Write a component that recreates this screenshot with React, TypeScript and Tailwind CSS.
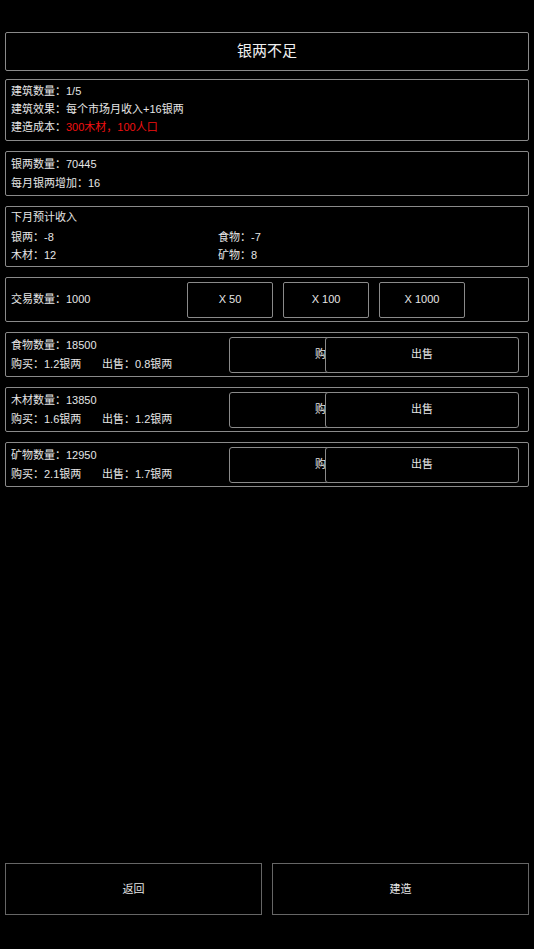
import React from "react";

const font = { fontFamily: '"Liberation Sans", "Noto Sans CJK SC", sans-serif' };

function Box({ children, className = "" }: { children: React.ReactNode; className?: string }) {
  return (
    <div className={`border border-[#8a8a8a] rounded-[2px] px-[5px] ${className}`}>{children}</div>
  );
}

function TradeRow({ name, amount, buy, sell }: { name: string; amount: number; buy: string; sell: string }) {
  return (
    <Box className="flex items-center h-[45px] mt-[10px]">
      <div className="w-[218px] shrink-0 leading-[19px] pt-[1px]">
        <div>
          {name}数量：{amount}
        </div>
        <div className="flex">
          <span className="w-[91px]">购买：{buy}银两</span>
          <span>出售：{sell}银两</span>
        </div>
      </div>
      <div className="flex overflow-hidden">
        <button className="w-[194px] h-[36px] shrink-0 border border-[#8a8a8a] rounded-[3px] bg-black text-[#e6e6e6] text-[11px]">
          购买
        </button>
        <button className="w-[194px] h-[36px] shrink-0 -ml-[98px] border border-[#8a8a8a] rounded-[3px] bg-black text-[#e6e6e6] text-[11px]">
          出售
        </button>
      </div>
    </Box>
  );
}

export default function App() {
  return (
    <div
      className="w-[534px] h-[949px] bg-black text-[#e6e6e6] text-[11px] flex flex-col px-[5px] pt-[32px] pb-[34px]"
      style={font}
    >
      <Box className="h-[39px] flex items-center justify-center text-[15px] text-[#f0f0f0]">银两不足</Box>

      <Box className="mt-[8px] leading-[18px] pt-[2px] pb-[4px]">
        <div>建筑数量：1/5</div>
        <div>建筑效果：每个市场月收入+16银两</div>
        <div>
          建造成本：<span className="text-[#f01010]">300木材，100人口</span>
        </div>
      </Box>

      <Box className="mt-[10px] leading-[18.5px] pt-[3px] pb-[3px]">
        <div>银两数量：70445</div>
        <div>每月银两增加：16</div>
      </Box>

      <Box className="mt-[10px] leading-[18px] pt-[1px] pb-[2px]">
        <div className="mb-[2px]">下月预计收入</div>
        <div className="grid grid-cols-[207px_1fr]">
          <div>银两：-8</div>
          <div>食物：-7</div>
          <div>木材：12</div>
          <div>矿物：8</div>
        </div>
      </Box>

      <Box className="mt-[10px] h-[45px] flex items-center">
        <div className="w-[176px] shrink-0">交易数量：1000</div>
        <div className="flex gap-[10px]">
          {["X 50", "X 100", "X 1000"].map((t) => (
            <button
              key={t}
              className="w-[86px] h-[36px] border border-[#8a8a8a] rounded-[2px] bg-black text-[#e6e6e6] text-[11px]"
            >
              {t}
            </button>
          ))}
        </div>
      </Box>

      <TradeRow name="食物" amount={18500} buy="1.2" sell="0.8" />
      <TradeRow name="木材" amount={13850} buy="1.6" sell="1.2" />
      <TradeRow name="矿物" amount={12950} buy="2.1" sell="1.7" />

      <div className="mt-auto flex gap-[10px]">
        <button className="flex-1 h-[52px] border border-[#666] bg-black text-[#e6e6e6] text-[11px]">返回</button>
        <button className="flex-1 h-[52px] border border-[#666] bg-black text-[#e6e6e6] text-[11px]">建造</button>
      </div>
    </div>
  );
}
